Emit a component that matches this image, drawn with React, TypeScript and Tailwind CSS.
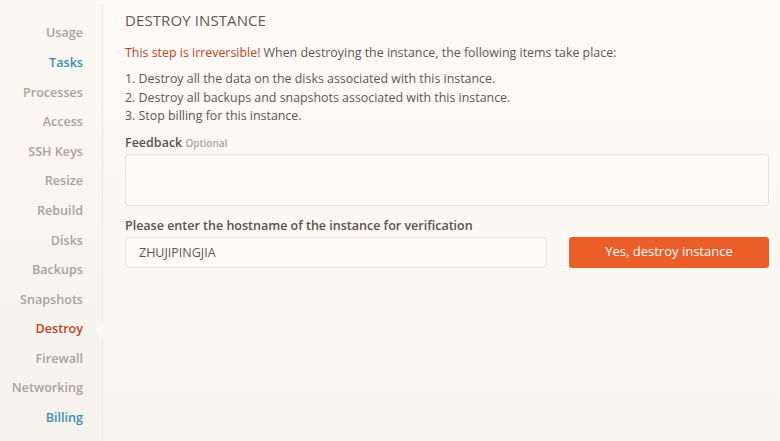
const items = [
  { label: "Usage", tone: "muted" },
  { label: "Tasks", tone: "blue" },
  { label: "Processes", tone: "muted" },
  { label: "Access", tone: "muted" },
  { label: "SSH Keys", tone: "muted" },
  { label: "Resize", tone: "muted" },
  { label: "Rebuild", tone: "muted" },
  { label: "Disks", tone: "muted" },
  { label: "Backups", tone: "muted" },
  { label: "Snapshots", tone: "muted" },
  { label: "Destroy", tone: "active" },
  { label: "Firewall", tone: "muted" },
  { label: "Networking", tone: "muted" },
  { label: "Billing", tone: "blue" },
];

const toneClass: Record<string, string> = {
  muted: "text-[#a8a39b]",
  blue: "text-[#3a8fb8]",
  active: "text-[#c2401f]",
};

const SideNav = () => {
  return (
    <aside className="w-[103px] shrink-0 bg-gradient-to-b from-[#fcf9f3] to-[#f6f3ed] pt-[4px]">
      <ul className="h-full border-r border-[#ece8e1] pt-[15px] flex flex-col">
        {items.map((item) => (
          <li key={item.label} className="relative h-[29.6px] flex items-center justify-end pr-[19px]">
            <span className={"text-[12.6px] font-semibold " + toneClass[item.tone]}>{item.label}</span>
            {item.tone === "active" && (
              <span className="absolute right-[-1px] top-1/2 -translate-y-1/2 w-0 h-0 border-y-[8px] border-y-transparent border-r-[8px] border-r-[#fdfaf4]"></span>
            )}
          </li>
        ))}
      </ul>
    </aside>
  );
};

export default function App() {
  return (
    <div
      className="w-[780px] h-[441px] flex overflow-hidden bg-gradient-to-b from-[#fffcf7] to-[#f8f5ef] text-[#5b5650]"
      style={{ fontFamily: '"Open Sans", "Noto Sans", sans-serif' }}
    >
      <SideNav />
      <main className="flex-1 pl-[22px] pr-[11px] pt-[9px]">
        <h1 className="text-[15px] uppercase text-[#5e5953] leading-[22px] tracking-[0.1px]">Destroy Instance</h1>
        <p className="mt-[13px] text-[12.4px] leading-[18px]">
          <span className="text-[#c2401f]">This step is irreversible!</span> When destroying the instance, the following items take place:
        </p>
        <ol className="mt-[8px] text-[12.4px] leading-[18.5px]">
          <li>1. Destroy all the data on the disks associated with this instance.</li>
          <li>2. Destroy all backups and snapshots associated with this instance.</li>
          <li>3. Stop billing for this instance.</li>
        </ol>
        <div className="mt-[8px] text-[12.5px] leading-[18px]">
          <span className="font-semibold text-[#57524c]">Feedback</span>{" "}
          <span className="text-[10px] font-semibold text-[#aaa59d]">Optional</span>
        </div>
        <textarea className="mt-[2px] block w-full h-[52px] rounded-[3px] border border-[#e6e2db] bg-[#fffcf7] resize-none outline-none"></textarea>
        <div className="mt-[11px] text-[12.5px] leading-[18px] font-semibold text-[#57524c]">
          Please enter the hostname of the instance for verification
        </div>
        <div className="mt-[2px] flex gap-[22px]">
          <input
            defaultValue="ZHUJIPINGJIA"
            className="w-[422px] h-[31px] rounded-[3px] border border-[#e6e2db] bg-[#fffcf7] px-[13px] text-[12.5px] text-[#5b5650] outline-none"
          />
          <button className="flex-1 h-[31px] rounded-[3px] bg-[#eb5e2a] text-white text-[13px]">
            Yes, destroy instance
          </button>
        </div>
      </main>
    </div>
  );
}
